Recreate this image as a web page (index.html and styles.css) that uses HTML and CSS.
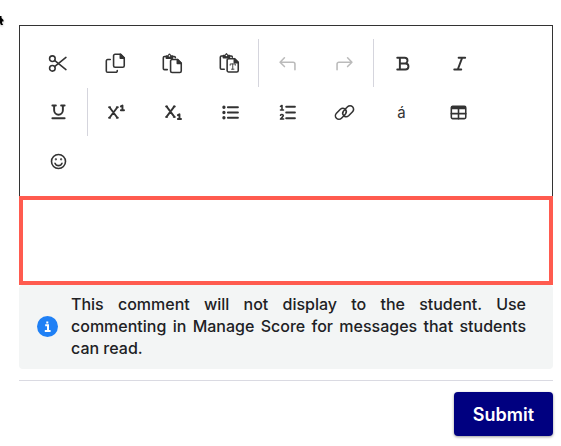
FILE: index.html
```
<!DOCTYPE html>
<html lang="en">
<head>
    <meta charset="UTF-8">
    <meta name="viewport" content="width=device-width, initial-scale=1.0">
    <title>Add Comment</title>
    <link rel="stylesheet" href="styles.css">
</head>
<body>
    <svg class="cursor" viewBox="0 0 6 14" aria-hidden="true">
        <path d="M0 2h1.500v2L3.500 6v1.500H2V9l1.200 2H1L0 9z"/>
    </svg>

    <form class="comment-form">
        <div class="editor">
            <div class="toolbar" role="toolbar" aria-label="Formatting">
                <button type="button" class="tool" aria-label="Cut">
                    <svg viewBox="0 0 24 24"><circle cx="5" cy="6.500" r="3.200"/><circle cx="5" cy="17.500" r="3.200"/><path d="M7.500 8.500L20.500 19M7.500 15.500L20.500 5"/></svg>
                </button>
                <button type="button" class="tool" aria-label="Copy">
                    <svg viewBox="0 0 24 24"><path d="M11.500 1.500h6.500l4 4v9a1.700 1.700 0 0 1-1.700 1.700h-8.800a1.700 1.700 0 0 1-1.700-1.700V3.200a1.700 1.700 0 0 1 1.700-1.700z"/><path class="solid" d="M17.500 1.500v4.500H22z"/><path d="M6 7.500H3A1.500 1.500 0 0 0 1.500 9v11.500A1.500 1.500 0 0 0 3 22h9.500a1.500 1.500 0 0 0 1.500-1.500v-.5"/></svg>
                </button>
                <button type="button" class="tool" aria-label="Paste">
                    <svg viewBox="0 0 24 24"><path d="M5 4H2.800a1.300 1.300 0 0 0-1.300 1.300v12.400A1.300 1.300 0 0 0 2.800 19H6M12 4h2a1.300 1.300 0 0 1 1.300 1.300"/><path class="solid" d="M5 6V3.500H7L8.500 1.500L10 3.500h2V6z"/><circle class="hole" cx="8.500" cy="3.300" r=".9"/><path d="M11.500 7.500H18l4 4v9a1.700 1.700 0 0 1-1.700 1.700h-8.800a1.700 1.700 0 0 1-1.700-1.700V9.200a1.700 1.700 0 0 1 1.700-1.700z"/><path class="solid" d="M17.500 7.500V12H22z"/></svg>
                </button>
                <button type="button" class="tool" aria-label="Paste as plain text">
                    <svg viewBox="0 0 24 24"><path d="M5 3.500H2.800a1.300 1.300 0 0 0-1.300 1.300v12.400a1.300 1.300 0 0 0 1.300 1.300H6M12 3.500h2a1.300 1.300 0 0 1 1.300 1.300"/><path class="solid" d="M5 5.500V3H7L8.500 1L10 3h2v2.500z"/><circle class="hole" cx="8.500" cy="2.800" r=".9"/><path d="M11 6.500h7l4 4V20a1.700 1.700 0 0 1-1.700 1.700H11A1.700 1.700 0 0 1 9.300 20V8.200A1.700 1.700 0 0 1 11 6.500z"/><path class="solid" d="M17.500 6.500V11H22z"/><path class="thin" d="M12.800 14v-1.500h5.800V14M15.700 12.500v6M14.300 18.500h2.800"/></svg>
                </button>
                <span class="divider"></span>
                <button type="button" class="tool" aria-label="Undo" disabled>
                    <svg viewBox="0 0 24 24"><path d="M8.500 5.500L3.500 10.500L8.500 15.500M3.500 10.500H18.500a2 2 0 0 1 2 2V19"/></svg>
                </button>
                <button type="button" class="tool" aria-label="Redo" disabled>
                    <svg viewBox="0 0 24 24"><path d="M15.500 5.500L20.500 10.500L15.500 15.500M20.500 10.500H5.500a2 2 0 0 0-2 2V19"/></svg>
                </button>
                <span class="divider"></span>
                <button type="button" class="tool" aria-label="Bold">
                    <svg viewBox="0 0 24 24"><path class="heavy" d="M6 5.500h8.500a3.200 3.200 0 0 1 0 6.400H9M14.500 11.900h.8a3.500 3.500 0 0 1 0 7H6M9 5.500v13.400"/></svg>
                </button>
                <button type="button" class="tool" aria-label="Italic">
                    <svg viewBox="0 0 24 24"><path class="heavy" d="M11 5.500h7.500M6 18.900h8M15 5.500L10 18.900"/></svg>
                </button>
                <button type="button" class="tool" aria-label="Underline">
                    <svg viewBox="0 0 24 24"><path class="heavy" d="M5 4h4M15 4h4M7 4v5.500a5 5 0 0 0 10 0V4M5 18.500h14"/></svg>
                </button>
                <span class="divider"></span>
                <button type="button" class="tool" aria-label="Superscript">
                    <svg viewBox="0 0 24 24"><path class="heavy" d="M4 6L13 18M13 6L4 18M3.500 6h1.200M12.300 6h1.200M3.500 18h1.200M12.300 18h1.200"/><path class="heavy" d="M17 5l1.800-1V9.500M17 9.500h3.600"/></svg>
                </button>
                <button type="button" class="tool" aria-label="Subscript">
                    <svg viewBox="0 0 24 24"><path class="heavy" d="M4 5L13 17M13 5L4 17M3.500 5h1.200M12.300 5h1.200M3.500 17h1.200M12.300 17h1.200"/><path class="heavy" d="M17 15l1.800-1v5.500M17 19.500h3.600"/></svg>
                </button>
                <button type="button" class="tool" aria-label="Bulleted list">
                    <svg viewBox="0 0 24 24"><path class="heavy" d="M9 6h11.500M9 12h11.500M9 18h11.500"/><circle class="solid" cx="4.500" cy="6" r="1"/><circle class="solid" cx="4.500" cy="12" r="1"/><circle class="solid" cx="4.500" cy="18" r="1"/></svg>
                </button>
                <button type="button" class="tool" aria-label="Numbered list">
                    <svg viewBox="0 0 24 24"><path class="heavy" d="M10.500 5.500H20.500M10.500 12H20.500M10.500 18.500H20.500"/><path d="M4 5l1.700-1v5M4 9.200h3.400M4 15.200c.6-1.500 3.400-1.300 3.200.5C7 17 5 18 4 19.500h3.600"/></svg>
                </button>
                <button type="button" class="tool" aria-label="Link">
                    <svg viewBox="0 0 24 24"><path d="M10.500 16.500l-2 2a4 4 0 0 1-5.700-5.700l4.500-4.500a4 4 0 0 1 6 5.200l-1 1.100M13.500 7.500l2-2a4 4 0 0 1 5.700 5.700l-4.500 4.500a4 4 0 0 1-6-5.200l1-1.100"/></svg>
                </button>
                <button type="button" class="tool tool-text" aria-label="Special characters">á</button>
                <button type="button" class="tool" aria-label="Table">
                    <svg viewBox="0 0 24 24"><rect x="3.800" y="5" width="16.500" height="14" rx="1.500"/><path class="solid" d="M4.500 5.500h15v2h-15z"/><path d="M12 8v11M3.800 13.300h16.500"/></svg>
                </button>
                <button type="button" class="tool" aria-label="Emoji">
                    <svg viewBox="0 0 24 24"><circle cx="12" cy="12" r="8"/><path d="M8 14a4.300 4.300 0 0 0 8 0"/><circle class="solid" cx="9" cy="9.500" r=".4"/><circle class="solid" cx="15" cy="9.500" r=".4"/></svg>
                </button>
            </div>
            <textarea class="comment-input" aria-label="Comment"></textarea>
        </div>

        <div class="note">
            <svg class="note-icon" viewBox="0 0 21 21" aria-hidden="true">
                <circle cx="10.500" cy="10.500" r="10.500"/>
                <path d="M8.200 9.300h2.800v5.700M7.800 15h5.800M10.300 5.500v2"/>
            </svg>
            <p class="note-text">This comment will not display to the student. Use commenting in Manage Score for messages that students can read.</p>
        </div>

        <div class="actions">
            <button type="submit" class="submit">Submit</button>
        </div>
    </form>
</body>
</html>
```
FILE: styles.css
```
* {
    box-sizing: border-box;
}

body {
    margin: 0;
    padding: 25px 8px 10px 19px;
    background: #fff;
    color: #202124;
    font-family: Inter, "Liberation Sans", sans-serif;
}

/* pointer resting over the left edge */
.cursor {
    position: absolute;
    top: 14px;
    left: 0;
    width: 6px;
    height: 14px;
    filter: drop-shadow(0 1px 1px rgba(0, 0, 0, 0.3));
}

.toolbar {
    display: flex;
    flex-wrap: wrap;
    row-gap: 1px;
    padding: 13px 10px 11px;
    border: 1px solid #333;
    border-bottom: none;
}

.tool {
    display: flex;
    align-items: center;
    justify-content: center;
    width: 57px;
    height: 48px;
    padding: 0;
    border: none;
    background: none;
    color: #333;
    cursor: pointer;
}

.tool:disabled {
    color: #bbb;
    cursor: default;
}

.tool svg {
    width: 21px;
    height: 21px;
    fill: none;
    stroke: currentColor;
    stroke-width: 1.8;
    stroke-linecap: round;
    stroke-linejoin: round;
}

.tool .heavy {
    stroke-width: 2.2;
}

.tool .thin {
    stroke-width: 1;
}

.tool .solid {
    fill: currentColor;
}

.tool .hole {
    fill: #fff;
    stroke: none;
}

.tool-text {
    font-family: Inter, "Liberation Sans", sans-serif;
    font-size: 15px;
}

.divider {
    width: 1px;
    height: 48px;
    background: #d5d5dd;
}

.comment-input {
    display: block;
    width: 100%;
    height: 89px;
    padding: 8px;
    border: 4px solid #ff5b4f;
    background: #fff;
    font: inherit;
    outline: none;
    resize: none;
}

.note {
    display: flex;
    align-items: center;
    gap: 13px;
    padding: 8px 27px 10px 18px;
    border-radius: 4px;
    background: #f3f5f5;
}

.note-icon {
    flex: none;
    width: 21px;
    height: 21px;
    fill: #1f80f5;
}

.note-icon path {
    fill: none;
    stroke: #fff;
    stroke-width: 2;
}

.note-text {
    margin: 0;
    font-size: 16px;
    font-weight: 500;
    line-height: 22px;
    text-align: justify;
}

.actions {
    display: flex;
    justify-content: flex-end;
    margin-top: 11px;
    padding-top: 11px;
    border-top: 1px solid #dadae2;
}

.submit {
    height: 44px;
    padding: 0 19px;
    border: none;
    border-radius: 4px;
    background: #000080;
    box-shadow: 0 1px 3px rgba(0, 0, 0, 0.4);
    color: #fff;
    font-family: inherit;
    font-size: 18px;
    font-weight: 600;
    cursor: pointer;
}
```
